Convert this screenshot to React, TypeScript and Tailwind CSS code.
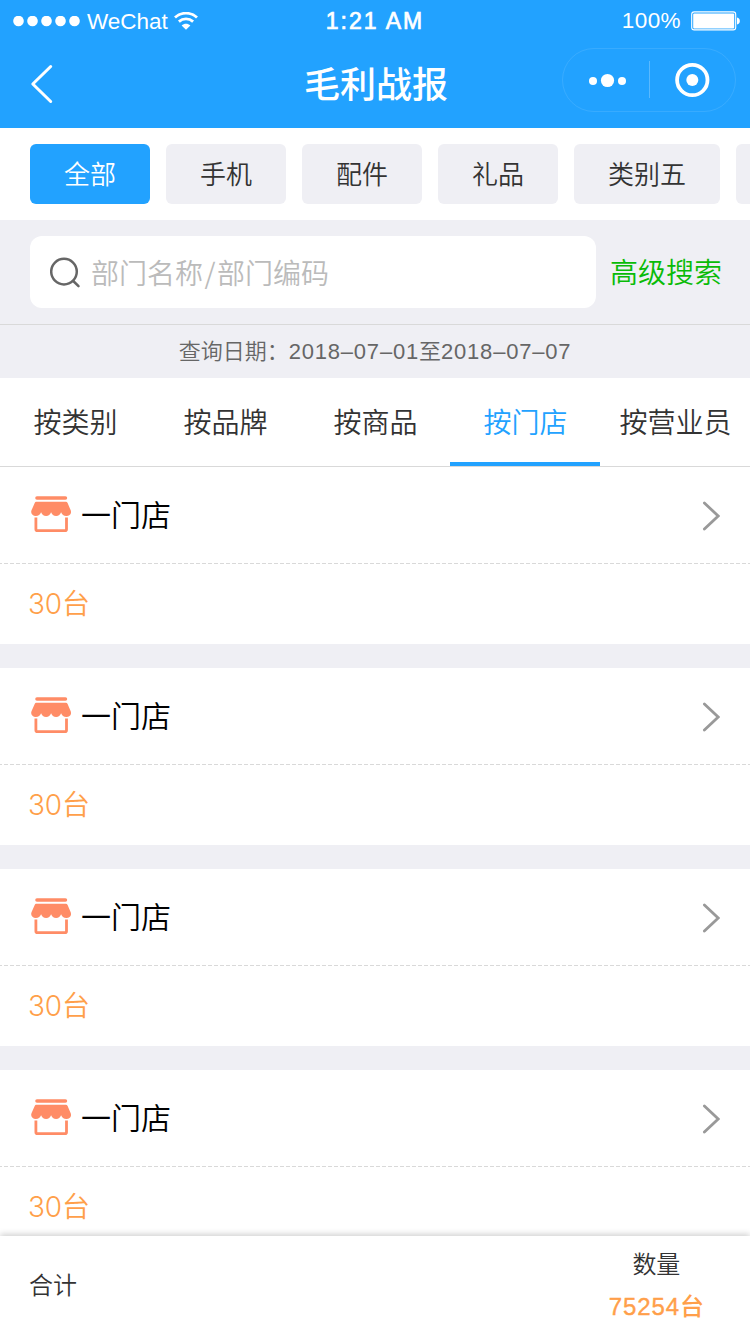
const categories = ["全部", "手机", "配件", "礼品", "类别五"];
const tabs = ["按类别", "按品牌", "按商品", "按门店", "按营业员"];
const stores = [
  { name: "一门店", count: 30 },
  { name: "一门店", count: 30 },
  { name: "一门店", count: 30 },
  { name: "一门店", count: 30 },
];

function StatusBar() {
  return (
    <div className="grid h-10 grid-cols-3 items-center text-[22px] leading-10">
      <div className="flex items-center pl-[13px]">
        <svg width="68" height="11" viewBox="0 0 68 11" fill="currentColor">
          <circle cx="5.5" cy="5" r="5.3" />
          <circle cx="19.5" cy="5" r="5.3" />
          <circle cx="33.5" cy="5" r="5.3" />
          <circle cx="47.5" cy="5" r="5.3" />
          <circle cx="61.5" cy="5" r="5.3" />
        </svg>
        <span className="ml-1.5 pt-0.5 text-[22.5px]">WeChat</span>
        <svg className="ml-1.5" width="24" height="18" viewBox="0 0 24 18" fill="none" stroke="currentColor" strokeWidth="2.8">
          <path d="M1 5.4C7 -0.2 17 -0.2 23 5.4" />
          <path d="M4.9 9.6C9 5.9 15 5.9 19.1 9.6" />
          <path d="M7.6 13.4C10.3 11.1 13.7 11.1 16.4 13.4L12 17.8Z" fill="currentColor" stroke="none" />
        </svg>
      </div>
      <div className="text-center text-[23px] tracking-[2px] [-webkit-text-stroke:0.7px_white]">1:21 AM</div>
      <div className="flex items-center justify-end pr-[9px]">
        <span className="mr-[10px] text-[22.5px] tracking-[0.4px]">100%</span>
        <svg width="50" height="20" viewBox="0 0 50 20" fill="none">
          <rect x="0.7" y="0.9" width="44" height="18" rx="2.5" stroke="white" strokeWidth="1.1" />
          <rect x="2.2" y="2.4" width="41" height="15" rx="1" fill="white" />
          <path d="M46 6.5C49.8 7.2 49.8 12.8 46 13.5Z" fill="white" />
        </svg>
      </div>
    </div>
  );
}

function NavBar() {
  return (
    <div className="grid h-[88px] grid-cols-[188px_1fr_188px] items-center">
      <svg className="ml-[30px]" width="24" height="40" viewBox="0 0 24 40" fill="none" stroke="white" strokeWidth="3" strokeLinecap="round" strokeLinejoin="round">
        <path d="M20.7 2.5L2.8 20L20.7 37.5" />
      </svg>
      <h1 className="pt-[3px] pl-0.5 text-center text-[36px] font-medium">毛利战报</h1>
      <div className="-mt-2 flex h-16 w-[174px] items-center rounded-full border border-white/10">
        <svg width="172" height="62" viewBox="0 0 172 62" fill="none">
          <g fill="white">
            <circle cx="30" cy="32" r="4" />
            <circle cx="44.5" cy="31.5" r="6.6" />
            <circle cx="59" cy="32" r="4" />
            <circle cx="129.3" cy="31" r="6" />
          </g>
          <path d="M86.5 12V49" stroke="white" strokeOpacity="0.25" />
          <circle cx="129.3" cy="31" r="15.2" stroke="white" strokeWidth="3.8" />
        </svg>
      </div>
    </div>
  );
}

function StoreIcon() {
  return (
    <svg className="mb-0.5 shrink-0" width="40" height="36" viewBox="0 0 40 36" fill="none">
      <rect x="4.2" y="0.3" width="32" height="3.5" rx="1.75" fill="#ff8c66" />
      <path d="M5.6 5.8H34.8C35.7 5.8 36.3 6.2 36.6 7L39.6 14.1C41 17.5 38.7 20 35.4 20C32.6 20 31 18.2 30.1 16.2C29.2 18.4 27.6 20 25.1 20C22.6 20 21 18.4 20.1 16.2C19.2 18.4 17.6 20 15.1 20C12.6 20 11 18.4 10.1 16.2C9.2 18.2 7.4 20 4.8 20C1.5 20 -0.8 17.5 0.6 14.1L3.7 7C4 6.2 4.7 5.8 5.6 5.8Z" fill="#ff8c66" />
      <path d="M4.9 21.6V33.2Q4.9 34.6 6.3 34.6H34.1Q35.5 34.6 35.5 33.2V21.6" stroke="#ff8c66" strokeWidth="2.8" />
    </svg>
  );
}

function StoreCard({ name, count }: { name: string; count: number }) {
  return (
    <article className="mb-6 bg-white">
      <div className="flex h-24 items-center pr-[30px] pl-[31px]">
        <StoreIcon />
        <h2 className="ml-[10px] flex-1 pt-px text-[30px] leading-10 text-black">{name}</h2>
        <svg width="18" height="32" viewBox="0 0 18 32" fill="none" stroke="#999999" strokeWidth="2.8" strokeLinecap="round">
          <path d="M2.4 4L16.2 17L2.4 30" />
        </svg>
      </div>
      <svg className="block" width="750" height="1">
        <path d="M0 0.5H750" stroke="#d9d9d9" strokeDasharray="4 2" strokeDashoffset="2" />
      </svg>
      <p className="h-20 pl-[28px] text-[28px] leading-20 font-[350] text-[#ff9f4a]">
        <span className="font-['Inter'] font-[350] tracking-[-0.2px]">{count}</span>台
      </p>
    </article>
  );
}

export default function App() {
  return (
    <div className="flex h-[1334px] w-[750px] flex-col overflow-hidden bg-[#efeff4] font-['Liberation_Sans','Noto_Sans_CJK_SC',sans-serif] font-[350] text-[#333333]">
      <header className="h-32 shrink-0 bg-[#22a2ff] text-white">
        <StatusBar />
        <NavBar />
      </header>

      <nav className="flex h-[92px] shrink-0 gap-4 overflow-hidden bg-white py-4 pl-[30px] text-[26px] leading-[60px]">
        {categories.map((category, index) => (
          <button
            key={category}
            className={`h-[60px] shrink-0 rounded-md pt-px text-center ${index === 4 ? "w-[146px]" : "w-[120px]"} ${index === 0 ? "bg-[#22a2ff] text-white" : "bg-[#efeff4]"}`}
          >
            {category}
          </button>
        ))}
        <span className="h-[60px] w-[120px] shrink-0 rounded-md bg-[#efeff4]" />
      </nav>

      <div className="flex h-[105px] shrink-0 items-center border-b border-[#d9d9d9] pl-[30px] text-[28px]">
        <div className="flex h-[72px] w-[566px] items-center rounded-xl bg-white pl-5 text-[#bbbbbb]">
          <svg width="31" height="31" viewBox="0 0 31 31" fill="none" stroke="#666666" strokeWidth="2.5" strokeLinecap="round">
            <circle cx="14" cy="14.6" r="12.8" />
            <path d="M23.2 24L28.5 29.2" />
          </svg>
          <span className="ml-2.5 pt-[3px] leading-[42px]">
            部门名称<span className="inline-block w-[14px] text-center font-['Noto_Sans_CJK_SC']">/</span>部门编码
          </span>
        </div>
        <button className="ml-3.5 pt-[3px] text-[#09bb07]">高级搜索</button>
      </div>

      <p className="h-[53px] shrink-0 text-center text-[22px] leading-[53px] text-[#666666]">
        查询日期：<span className="tracking-[0.8px]">2018–07–01</span>至<span className="tracking-[0.8px]">2018–07–07</span>
      </p>

      <nav className="grid h-[89px] shrink-0 grid-cols-5 border-b border-[#d9d9d9] bg-white text-[28px] leading-[88px]">
        {tabs.map((tab, index) => (
          <button
            key={tab}
            className={`h-[88px] pt-0.5 pl-px text-center whitespace-nowrap ${index === 3 ? "border-b-4 border-[#22a2ff] text-[#22a2ff]" : ""}`}
          >
            {tab}
          </button>
        ))}
      </nav>

      <main className="min-h-0 flex-1 overflow-hidden">
        {stores.map((store, index) => (
          <StoreCard key={index} name={store.name} count={store.count} />
        ))}
      </main>

      <footer className="relative flex h-[98px] shrink-0 items-center justify-between bg-white pt-0.5 pr-[46px] pl-[29px] text-[24px] shadow-[0_-2px_6px_rgba(0,0,0,0.18)]">
        <span>合计</span>
        <div className="text-center">
          <p className="leading-[42px]">数量</p>
          <p className="leading-[42px] font-medium text-[#ff9f4a]">
            <span className="tracking-[0.9px] [-webkit-text-stroke:0.4px_#ff9f4a]">75254</span>台
          </p>
        </div>
      </footer>
    </div>
  );
}
